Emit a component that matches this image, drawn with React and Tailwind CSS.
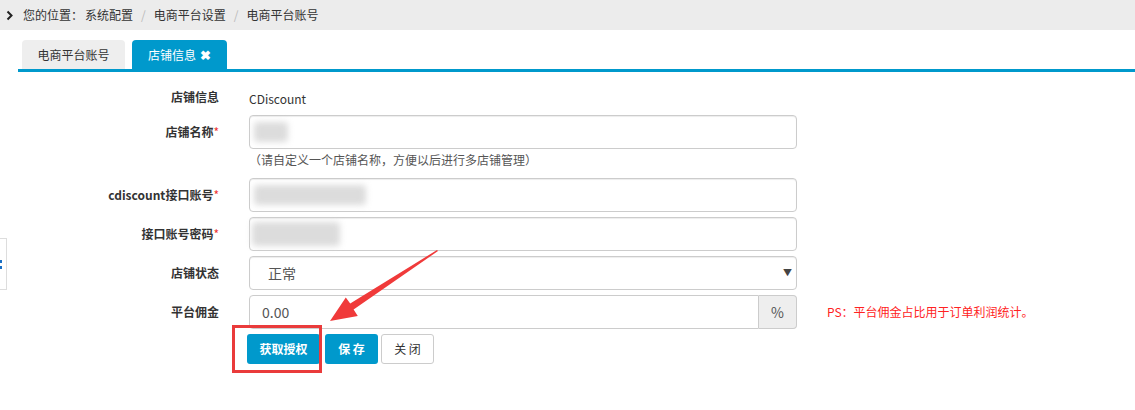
import React from 'react';

const font = { fontFamily: '"Noto Sans CJK SC", "Liberation Sans", sans-serif' };

function Label({ text, required }) {
  return (
    <div className="w-[219px] shrink-0 text-right text-[12px] font-bold text-[#333]">
      {text}
      {required && <span className="text-[#e33] font-normal">*</span>}
    </div>
  );
}

function Blur({ w, h = 22 }) {
  return <div className="bg-[#dcdcdc] blur-[3px] rounded-sm" style={{ width: w, height: h }} />;
}

function Row({ label, required, children, extra, className = '' }) {
  return (
    <div className={`flex items-center gap-[30px] ${className}`}>
      <Label text={label} required={required} />
      <div className="w-[548px] shrink-0">{children}</div>
      {extra}
    </div>
  );
}

const inputCls =
  'h-[34px] w-full border border-[#ccc] rounded-[4px] bg-white shadow-[inset_0_1px_1px_rgba(0,0,0,0.075)] flex items-center px-[12px] text-[14px] text-[#555]';

export default function App() {
  return (
    <div className="relative w-[1135px] h-[410px] bg-white overflow-hidden" style={font}>
      {/* breadcrumb */}
      <div className="h-[30px] bg-[#ececec] flex items-center text-[12px] text-[#333]">
        <svg className="ml-[6px] mr-[10px]" width="7" height="11" viewBox="0 0 7 11">
          <polyline points="1.5,1.5 5.5,5.5 1.5,9.5" fill="none" stroke="#222" strokeWidth="2" />
        </svg>
        <span>您的位置：</span>
        <span className="ml-[2px]">系统配置</span>
        <span className="mx-[8px] text-[#bbb]">/</span>
        <span>电商平台设置</span>
        <span className="mx-[8px] text-[#bbb]">/</span>
        <span>电商平台账号</span>
      </div>

      {/* tabs */}
      <div className="mt-[10px] ml-[18px] flex items-end gap-[7px] pl-[4px] border-b-[3px] border-[#0099cc] h-[32px]">
        <div className="w-[103px] h-[29px] bg-[#eee] rounded-t-[4px] flex items-center justify-center text-[12px] text-[#333]">
          电商平台账号
        </div>
        <div className="w-[95px] h-[29px] bg-[#0099cc] rounded-t-[4px] flex items-center pl-[16px] text-[12px] text-white">
          店铺信息 <span className="ml-[4px] font-bold text-[13px]">✖</span>
        </div>
      </div>

      {/* form */}
      <div className="pt-[7px]">
        <Row label="店铺信息" className="h-[35px]">
          <span className="text-[12px] text-[#333]">CDiscount</span>
        </Row>
        <Row label="店铺名称" required className="mt-[1px]">
          <div className={inputCls + ' !px-[4px]'}>
            <Blur w={34} h={20} />
          </div>
        </Row>
        <div className="h-[21px] pl-[249px] flex items-center text-[12px] text-[#555]">
          （请自定义一个店铺名称，方便以后进行多店铺管理）
        </div>
        <Row label="cdiscount接口账号" required className="mt-[8px]">
          <div className={inputCls + ' !px-[4px]'}>
            <Blur w={112} h={20} />
          </div>
        </Row>
        <Row label="接口账号密码" required className="mt-[5px]">
          <div className={inputCls + ' !px-[2px]'}>
            <Blur w={88} h={24} />
          </div>
        </Row>
        <Row label="店铺状态" className="mt-[5px]">
          <div className={inputCls + ' justify-between !pl-[18px] !pr-[4px]'}>
            <span>正常</span>
            <span className="text-[9px] text-[#444]">▼</span>
          </div>
        </Row>
        <Row
          label="平台佣金"
          className="mt-[5px]"
          extra={<span className="text-[12px] text-[#f22]">PS：平台佣金占比用于订单利润统计。</span>}
        >
          <div className="flex h-[34px]">
            <div className="flex-1 border border-[#ccc] rounded-l-[4px] flex items-center px-[12px] text-[14px] text-[#555]">
              0.00
            </div>
            <div className="w-[38px] border border-l-0 border-[#ccc] bg-[#eee] rounded-r-[4px] flex items-center justify-center text-[14px] text-[#555]">
              %
            </div>
          </div>
        </Row>
        <div className="mt-[5px] pl-[247px] flex gap-[4px]">
          <button className="h-[30px] w-[73px] bg-[#0099cc] text-white text-[12px] font-bold rounded-[3px]">获取授权</button>
          <button className="h-[30px] w-[53px] bg-[#0099cc] text-white text-[12px] font-bold rounded-[3px] ml-[1px]">保 存</button>
          <button className="h-[30px] w-[53px] bg-white border border-[#ccc] text-[#333] text-[12px] rounded-[3px] ml-[-1px]">关 闭</button>
        </div>
      </div>

      {/* left sidebar toggle */}
      <div className="absolute left-[-3px] top-[238px] w-[10px] h-[52px] border border-[#ddd] bg-white flex flex-col justify-center gap-[3px]">
        <div className="w-[4px] h-[3px] bg-[#1a6fc4]" />
        <div className="w-[4px] h-[3px] bg-[#1a6fc4]" />
      </div>

      {/* annotation: red box */}
      <div className="absolute left-[232px] top-[325px] w-[90px] h-[48px] border-[3px] border-[#ea3b3b]" />

      {/* annotation: arrow */}
      <svg className="absolute left-0 top-0 pointer-events-none" width="1135" height="410">
        <polygon
          points="438,251 353.6,309.5 357.8,316 330,321 345.8,297.5 350.2,303.5 437,250"
          fill="#f03a3a"
        />
      </svg>
    </div>
  );
}
